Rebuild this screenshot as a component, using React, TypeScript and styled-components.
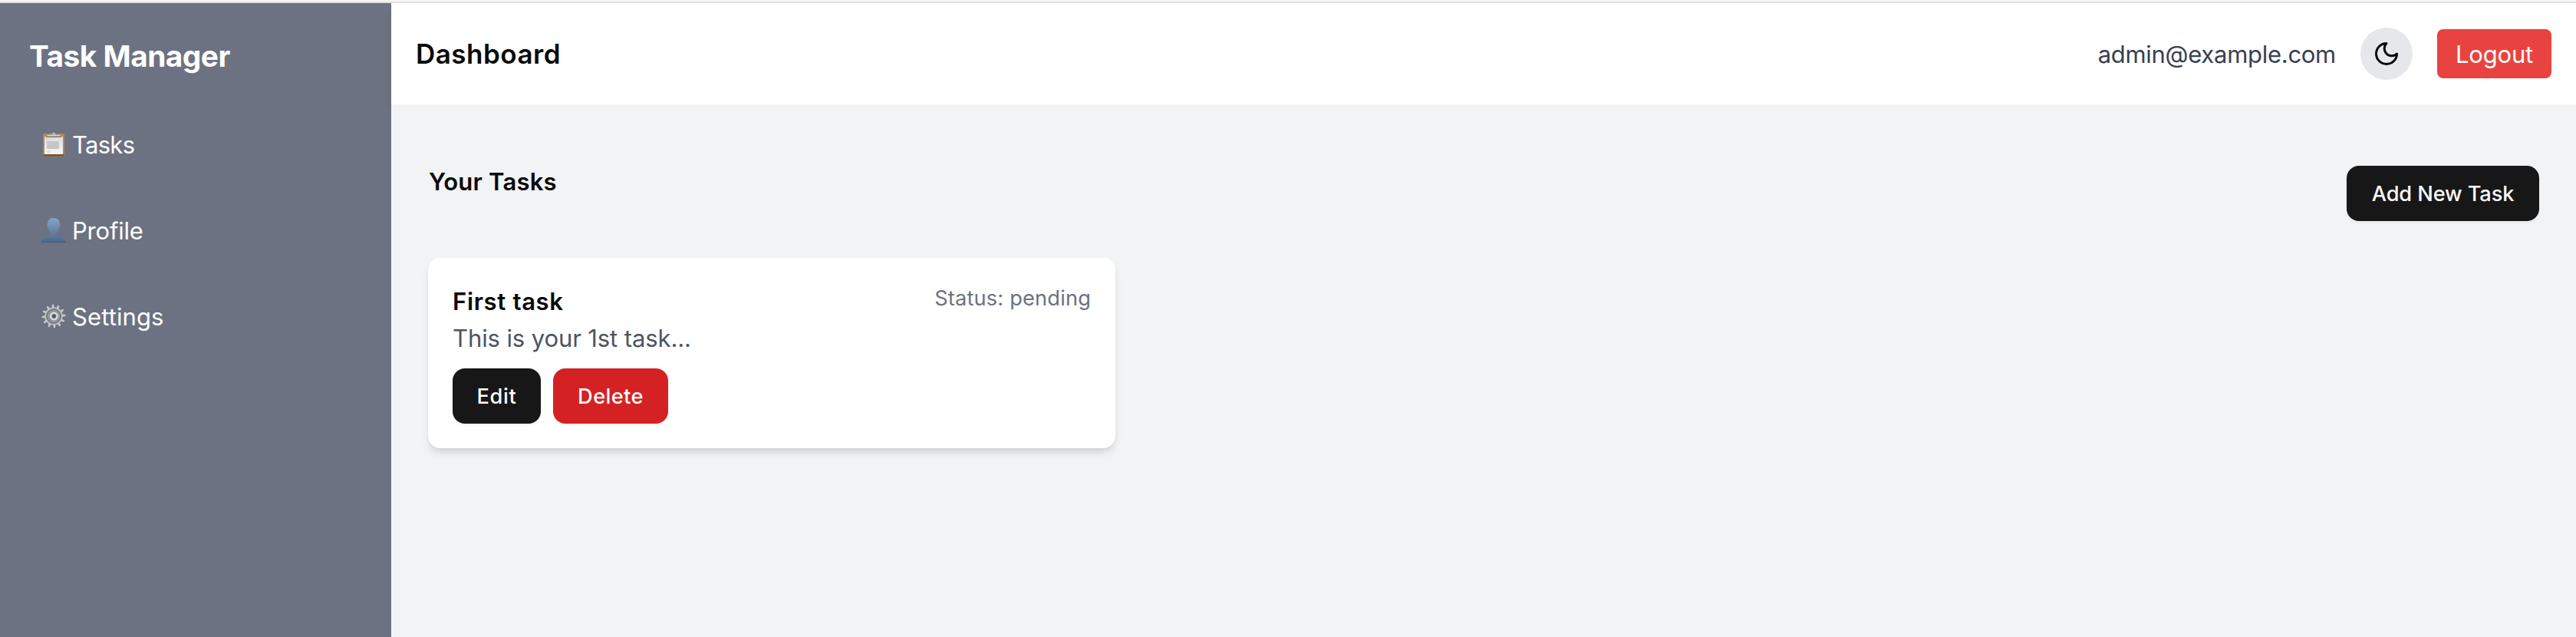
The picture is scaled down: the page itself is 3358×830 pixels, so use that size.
import React from "react";
import styled, { createGlobalStyle } from "styled-components";

const GlobalStyle = createGlobalStyle`
  *, *::before, *::after { box-sizing: border-box; }
  html, body, #root { height: 100%; }
  body { margin: 0; background: #f2f3f5; color: #0a0a0a; font-family: Inter, "Liberation Sans", sans-serif; -webkit-font-smoothing: antialiased; overflow: hidden; }
  h1, h2, h3, p { margin: 0; }
  button { border: 0; font-family: inherit; cursor: pointer; }
`;

const Page = styled.div`
  height: 100vh;
  display: flex;
  flex-direction: column;
`;

const TopEdge = styled.div`
  flex: none;
  height: 4px;
  background: #f8f7f6;
  border-bottom: 2px solid #e3e1df;
`;

const Shell = styled.div`
  flex: 1;
  min-height: 0;
  display: flex;
`;

const Sidebar = styled.aside`
  flex: none;
  width: 510px;
  padding: 41px 38px;
  background: #6c7281;
  color: #fff;
`;

const Brand = styled.h1`
  font-size: 38.8px;
  line-height: 56px;
  font-weight: 700;
  letter-spacing: -0.5px;
`;

const Nav = styled.nav`
  display: flex;
  flex-direction: column;
  gap: 32px;
  margin-top: 47px;
`;

const NavItem = styled.a`
  display: flex;
  align-items: center;
  gap: 8px;
  height: 80px;
  padding-left: 16px;
  svg { flex: none; display: block; }
`;

const NavLabel = styled.span<{ $tracking: number }>`
  padding-top: 2px;
  font-size: 31px;
  line-height: 48px;
  letter-spacing: ${(p) => p.$tracking}px;
`;

const Main = styled.div`
  flex: 1;
  display: flex;
  flex-direction: column;
`;

const Header = styled.header`
  flex: none;
  display: flex;
  align-items: center;
  justify-content: space-between;
  height: 132px;
  padding: 0 32px;
  background: #fff;
  box-shadow: 0 8px 12px -2px rgba(0, 0, 0, 0.1), 0 4px 8px -4px rgba(0, 0, 0, 0.1);
`;

const PageTitle = styled.h2`
  font-size: 35px;
  line-height: 56px;
  font-weight: 600;
  letter-spacing: 0.5px;
`;

const Account = styled.div`
  display: flex;
  align-items: center;
  gap: 32px;
`;

const Email = styled.span`
  padding-top: 2px;
  color: #374151;
  font-size: 31px;
  line-height: 48px;
  letter-spacing: -0.28px;
`;

const ThemeToggle = styled.button`
  display: grid;
  place-items: center;
  width: 68px;
  height: 68px;
  padding: 0;
  border-radius: 50%;
  background: #e5e7eb;
  color: #0a0a0a;
`;

const LogoutButton = styled.button`
  width: 149px;
  height: 64px;
  padding: 2px 0 0;
  border-radius: 8px;
  background: #e84340;
  color: #fff;
  font-size: 31px;
  line-height: 48px;
  letter-spacing: -0.2px;
`;

const Content = styled.main`
  position: relative;
  flex: 1;
  padding: 80px 48px;
  background: #f2f3f5;
`;

const SectionHead = styled.div`
  display: flex;
  align-items: flex-start;
  justify-content: space-between;
`;

const SectionTitle = styled.h2`
  padding-left: 1px;
  font-size: 31px;
  line-height: 42px;
  font-weight: 600;
  letter-spacing: 0.2px;
`;

const Button = styled.button<{ $width: number; $tracking: number; $danger?: boolean }>`
  width: ${(p) => p.$width}px;
  height: 72px;
  padding: 2px 0 0;
  border-radius: 16px;
  background: ${(p) => (p.$danger ? "#d42224" : "#171717")};
  color: ${(p) => (p.$danger ? "#fff" : "#fafafa")};
  font-size: 27.2px;
  line-height: 40px;
  font-weight: 500;
  letter-spacing: ${(p) => p.$tracking}px;
  box-shadow: 0 2px 4px rgba(0, 0, 0, 0.05);
`;

const Card = styled.article`
  width: 896px;
  height: 248px;
  margin-top: 48px;
  padding: 33px 32px 32px;
  border-radius: 16px;
  background: #fff;
  box-shadow: 0 8px 12px -2px rgba(0, 0, 0, 0.1), 0 4px 8px -4px rgba(0, 0, 0, 0.1);
`;

const CardTop = styled.div`
  display: flex;
  justify-content: space-between;
`;

const TaskName = styled.h3`
  font-size: 31px;
  line-height: 48px;
  font-weight: 600;
  letter-spacing: 0.66px;
`;

const Status = styled.span`
  color: #6b7280;
  font-size: 27.2px;
  line-height: 40px;
  letter-spacing: 0.18px;
`;

const Description = styled.p`
  color: #4b5563;
  font-size: 31px;
  line-height: 48px;
  letter-spacing: -0.1px;
`;

const Actions = styled.div`
  display: flex;
  gap: 16px;
  margin-top: 15px;
`;

const ClipboardIcon = () => (
  <svg width="32" height="32" viewBox="0 0 32 32">
    <defs>
      <linearGradient id="paper" x1="0" y1="0" x2="0" y2="1">
        <stop offset="0" stopColor="#dadbdc" />
        <stop offset="1" stopColor="#f7f7f7" />
      </linearGradient>
    </defs>
    <rect x="2" y="2" width="28" height="30" rx="1.6" fill="#b28a50" />
    <rect x="2.5" y="29" width="27" height="2.6" rx="1" fill="#70502a" />
    <rect x="4" y="6" width="24" height="23" fill="url(#paper)" />
    <path d="M7 12H23V22H7Z" fill="#c6c7c9" />
    <path d="M7 9.5H10M7 25H11M7 27H12" stroke="#c9cacc" strokeWidth=".8" />
    <path d="M6.5 5.8V4.6Q7 3.8 9 3.8H13.3Q14 .5 16 .5T18.7 3.8H23Q25 3.8 25.5 4.6V5.8Z" fill="#a9b3c1" />
    <path d="M6 5.8H26V7H6Z" fill="#777174" />
    <path d="M8 4.6H24" stroke="#d8dee6" strokeWidth="1" />
  </svg>
);

const ProfileIcon = () => (
  <svg width="32" height="32" viewBox="0 0 32 32">
    <defs>
      <linearGradient id="bust" x1="0" y1="0" x2="0" y2="1">
        <stop offset="0" stopColor="#86a5c3" />
        <stop offset="1" stopColor="#49688b" />
      </linearGradient>
    </defs>
    <path d="M16 0C10.5 0 8 3.5 8 8C7.2 8.5 7.5 11.5 8.7 12.5C9.3 15.5 10.5 17.5 12.3 19C12.8 21.5 11.5 23.5 8.5 24.5C4 25.5.8 27 .3 32H31.7C31.2 27 28 25.5 23.5 24.5C20.5 23.5 19.2 21.5 19.7 19C21.5 17.5 22.7 15.5 23.3 12.5C24.5 11.5 24.8 8.5 24 8C24 3.5 21.5 0 16 0Z" fill="url(#bust)" />
    <path d="M.3 31.5H31.7" stroke="#3d5878" strokeWidth="1" />
  </svg>
);

const GearIcon = () => (
  <svg width="32" height="32" viewBox="0 0 32 32">
    <g transform="rotate(-4 16 16)">
      {Array.from({ length: 12 }, (_, i) => (
        <path key={i} d="M13.8 6L14.7.3H17.3L18.2 6Z" fill="#c3c8cd" stroke="#54575c" strokeWidth=".4" transform={`rotate(${i * 30} 16 16)`} />
      ))}
    </g>
    <circle cx="16" cy="16" r="11.8" fill="#b9bec3" />
    <circle cx="16" cy="16" r="9.3" fill="#85898d" stroke="#5e6266" strokeWidth="1" />
    <circle cx="16" cy="16" r="7.3" fill="none" stroke="#a0a4a7" strokeWidth="1" />
    <circle cx="16.3" cy="16" r="4.3" fill="#777b80" stroke="#d3d8dd" strokeWidth="2.8" />
    <circle cx="16.3" cy="16" r="2.3" fill="#505459" />
  </svg>
);

const MoonIcon = () => (
  <svg width="36" height="36" viewBox="0 0 24 24" fill="none" stroke="currentColor" strokeWidth="2" strokeLinecap="round" strokeLinejoin="round">
    <path d="M12 3a6 6 0 0 0 9 9 9 9 0 1 1-9-9Z" />
  </svg>
);

const navItems = [
  { label: "Tasks", icon: <ClipboardIcon />, tracking: -0.72 },
  { label: "Profile", icon: <ProfileIcon />, tracking: -0.22 },
  { label: "Settings", icon: <GearIcon />, tracking: 0.1 },
];

export default function App() {
  return (
    <Page>
      <GlobalStyle />
      <TopEdge />
      <Shell>
        <Sidebar>
          <Brand>Task Manager</Brand>
          <Nav>
            {navItems.map((item) => (
              <NavItem key={item.label}>
                {item.icon}
                <NavLabel $tracking={item.tracking}>{item.label}</NavLabel>
              </NavItem>
            ))}
          </Nav>
        </Sidebar>
        <Main>
          <Header>
            <PageTitle>Dashboard</PageTitle>
            <Account>
              <Email>admin@example.com</Email>
              <ThemeToggle aria-label="Toggle theme">
                <MoonIcon />
              </ThemeToggle>
              <LogoutButton>Logout</LogoutButton>
            </Account>
          </Header>
          <Content>
            <SectionHead>
              <SectionTitle>Your Tasks</SectionTitle>
              <Button $width={251} $tracking={-0.1}>Add New Task</Button>
            </SectionHead>
            <Card>
              <CardTop>
                <TaskName>First task</TaskName>
                <Status>Status: pending</Status>
              </CardTop>
              <Description>This is your 1st task...</Description>
              <Actions>
                <Button $width={115} $tracking={0.7}>Edit</Button>
                <Button $width={150} $tracking={0.4} $danger>Delete</Button>
              </Actions>
            </Card>
          </Content>
        </Main>
      </Shell>
    </Page>
  );
}
